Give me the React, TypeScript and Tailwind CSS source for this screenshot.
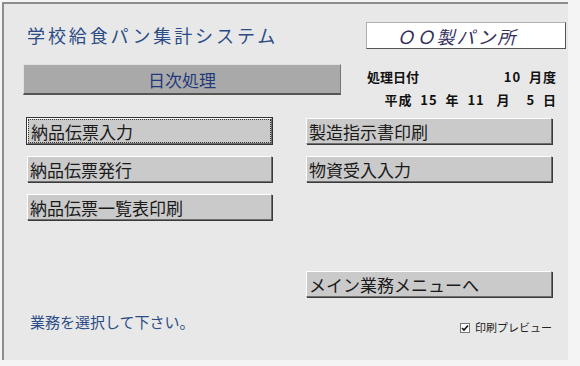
import React from 'react';

const font = { fontFamily: '"Noto Sans CJK JP", "Noto Sans", sans-serif' };

const Btn: React.FC<{ label: string; focused?: boolean }> = ({ label, focused }) => (
  <div
    className={`h-[26px] bg-[#cacaca] border border-t-white border-l-white border-b-[#6e6e6e] border-r-[#6e6e6e] shadow-[1px_1px_0_#3a3a3a] ${
      focused ? 'outline outline-1 outline-[#333]' : ''
    }`}
  >
    <div
      className={`h-full flex items-center pl-[2px] text-[17px] leading-none text-[#1a1a1a] ${
        focused ? 'border border-dotted border-[#333]' : ''
      }`}
    >
      {label}
    </div>
  </div>
);

const App: React.FC = () => {
  return (
    <div className="w-[580px] h-[366px] bg-[#f4f4f4] pt-[2px] pl-[2px] overflow-hidden" style={font}>
      <div className="w-[566px] h-[358px] bg-[#e8e8e8] border-t-2 border-l-2 border-t-[#8c8c8c] border-l-[#8c8c8c] flex flex-col">
        {/* header */}
        <div className="flex items-start justify-between pt-[20px] pr-[2px]">
          <div className="pl-[23px] pt-[2px] text-[18px] tracking-[2.9px] text-[#2b4c86] leading-none">
            学校給食パン集計システム
          </div>
          <div className="w-[200px] h-[27px] bg-white border border-t-[#b0b0b0] border-l-[#b0b0b0] border-b-[#555] border-r-[#555] flex items-center justify-center pr-[18px] text-[18px] italic tracking-[2px] text-[#33305e] leading-none -mt-[2px]">
            ＯＯ製パン所
          </div>
        </div>

        {/* sub header */}
        <div className="flex items-start mt-[15px]">
          <div className="ml-[19px] w-[318px] h-[31px] bg-[#a9a9a9] border-t border-l border-t-[#e0e0e0] border-l-[#e0e0e0] border-b-2 border-r border-b-[#555] border-r-[#777] flex items-center justify-center text-[17px] text-[#22397a] leading-none">
            日次処理
          </div>
          <div className="ml-[26px] w-[190px] text-[13px] font-bold text-[#111] leading-none pt-[6px]">
            <div className="flex justify-between">
              <span>処理日付</span>
              <span className="tracking-[1px]">10&nbsp;&nbsp;月度</span>
            </div>
            <div className="flex justify-end mt-[10px] tracking-[1px]">
              平成&nbsp;&nbsp;15&nbsp;&nbsp;年&nbsp;&nbsp;11&nbsp;&nbsp;&nbsp;月&nbsp;&nbsp;&nbsp;&nbsp;5&nbsp;&nbsp;日
            </div>
          </div>
        </div>

        {/* buttons */}
        <div className="grid grid-cols-[245px_246px] gap-x-[34px] gap-y-[12px] ml-[23px] mt-[12px]">
          <Btn label="納品伝票入力" focused />
          <Btn label="製造指示書印刷" />
          <Btn label="納品伝票発行" />
          <Btn label="物資受入入力" />
          <Btn label="納品伝票一覧表印刷" />
        </div>
        <div className="grid grid-cols-[245px_246px] gap-x-[34px] ml-[23px] mt-[51px]">
          <div />
          <Btn label="メイン業務メニューへ" />
        </div>

        {/* footer */}
        <div className="flex items-end justify-between mt-[17px]">
          <div className="pl-[26px] text-[15px] text-[#2b4c86] leading-none">業務を選択して下さい。</div>
          <div className="flex items-center gap-[5px] mr-[16px] mb-[-4px] text-[11px] text-[#222] leading-none">
            <span className="w-[10px] h-[10px] bg-white border border-[#777] flex items-center justify-center">
              <svg width="8" height="8" viewBox="0 0 8 8">
                <path d="M1 4 L3 6 L7 1.5" stroke="#111" strokeWidth="1.6" fill="none" />
              </svg>
            </span>
            <span>印刷プレビュー</span>
          </div>
        </div>
      </div>
    </div>
  );
};

export default App;
